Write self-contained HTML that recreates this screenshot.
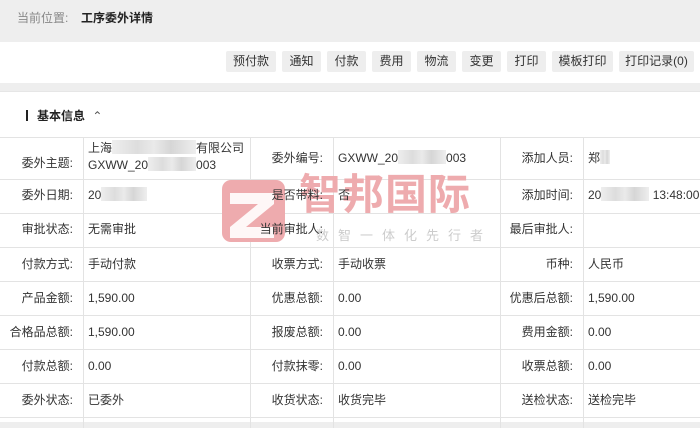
<!DOCTYPE html>
<html><head><meta charset="utf-8"><style>
*{margin:0;padding:0;box-sizing:border-box}
body{width:700px;height:422px;overflow:hidden;background:#eee;font-family:"Liberation Sans","Noto Sans CJK SC",sans-serif;font-size:12px;line-height:16px;color:#333;position:relative}
.hdr{position:absolute;left:0;top:0;width:700px;height:42px;background:#eee}
.hdr .a{position:absolute;left:17px;top:10px;color:#888}
.hdr .b{position:absolute;left:81px;top:10px;color:#222;font-weight:bold}
.bar{position:absolute;left:0;top:42px;width:700px;height:41px;background:#fff}
.btn{position:absolute;top:9px;height:21px;line-height:21px;background:#eee;border-radius:2px;text-align:center;color:#333;font-size:12px}
.card{position:absolute;left:0;top:91px;width:700px;height:331px;background:#fff;border-top:1px solid #e6e6e6}
.ttl{position:absolute;left:26px;top:16px;font-weight:bold;color:#222}
.ttl i{display:inline-block;width:2px;height:11px;background:#222;vertical-align:-1px;margin-right:9px}
.hl{position:absolute;left:0;width:700px;height:1px;background:#e3e3e3}
.vl{position:absolute;top:46px;width:1px;height:290px;background:#e3e3e3}
.t{position:absolute;white-space:nowrap;line-height:16px}
.l{text-align:right}
.blur{display:inline-block;height:14px;vertical-align:-2px;background:linear-gradient(90deg,#eee,#ddd 30%,#eaeaea 50%,#d6d6d6 70%,#eee)}
</style></head><body>
<div class="hdr"><span class="a">当前位置:</span><span class="b">工序委外详情</span></div>
<div class="bar">
<div class="btn" style="left:226px;width:50px">预付款</div>
<div class="btn" style="left:282px;width:39px">通知</div>
<div class="btn" style="left:327px;width:39px">付款</div>
<div class="btn" style="left:372px;width:39px">费用</div>
<div class="btn" style="left:417px;width:39px">物流</div>
<div class="btn" style="left:462px;width:39px">变更</div>
<div class="btn" style="left:507px;width:39px">打印</div>
<div class="btn" style="left:552px;width:61px">模板打印</div>
<div class="btn" style="left:619px;width:75px">打印记录(0)</div>
</div>
<div class="card">
<div class="ttl"><i></i>基本信息 <span style="font-weight:normal;color:#555;margin-left:4px">&#8963;</span></div>
<div class="hl" style="top:45px"></div>
<div class="hl" style="top:87px"></div>
<div class="hl" style="top:121px"></div>
<div class="hl" style="top:155px"></div>
<div class="hl" style="top:189px"></div>
<div class="hl" style="top:223px"></div>
<div class="hl" style="top:257px"></div>
<div class="hl" style="top:291px"></div>
<div class="hl" style="top:325px"></div>
<div class="vl" style="left:83px"></div>
<div class="vl" style="left:250px"></div>
<div class="vl" style="left:333px"></div>
<div class="vl" style="left:500px"></div>
<div class="vl" style="left:583px"></div>
</div>
<svg style="position:absolute;left:222px;top:180px" width="63" height="62" viewBox="0 0 63 62"><rect width="63" height="62" rx="9" fill="#eeabae"/><path d="M8 13 H52 V24 L24 47 H52 V58 H8 V47 L36 24 H8 Z" fill="#fff" opacity=".9"/></svg>
<div class="t" style="left:299px;top:170px;font-size:42px;line-height:50px;color:#eeabae;font-weight:bold;letter-spacing:1px">智邦国际</div>
<div class="t" style="left:316px;top:228px;font-size:13px;color:#ccc;letter-spacing:9px">数智一体化先行者</div>

<div class="t l" style="right:627px;top:155px">委外主题:</div>
<div class="t" style="left:88px;top:140px">上海<span class="blur" style="width:84px"></span>有限公司</div>
<div class="t" style="left:88px;top:157px">GXWW_20<span class="blur" style="width:48px"></span>003</div>
<div class="t l" style="right:377px;top:150px">委外编号:</div>
<div class="t" style="left:338px;top:150px">GXWW_20<span class="blur" style="width:48px"></span>003</div>
<div class="t l" style="right:127px;top:150px">添加人员:</div>
<div class="t" style="left:588px;top:150px">郑<span class="blur" style="width:10px"></span></div>

<div class="t l" style="right:627px;top:187px">委外日期:</div>
<div class="t" style="left:88px;top:187px">20<span class="blur" style="width:46px"></span></div>
<div class="t l" style="right:377px;top:187px">是否带料:</div>
<div class="t" style="left:338px;top:187px">否</div>
<div class="t l" style="right:127px;top:187px">添加时间:</div>
<div class="t" style="left:588px;top:187px">20<span class="blur" style="width:48px"></span> 13:48:00</div>

<div class="t l" style="right:627px;top:221px">审批状态:</div>
<div class="t" style="left:88px;top:221px">无需审批</div>
<div class="t l" style="right:377px;top:221px">当前审批人:</div>
<div class="t l" style="right:127px;top:221px">最后审批人:</div>

<div class="t l" style="right:627px;top:256px">付款方式:</div>
<div class="t" style="left:88px;top:256px">手动付款</div>
<div class="t l" style="right:377px;top:256px">收票方式:</div>
<div class="t" style="left:338px;top:256px">手动收票</div>
<div class="t l" style="right:127px;top:256px">币种:</div>
<div class="t" style="left:588px;top:256px">人民币</div>

<div class="t l" style="right:627px;top:290px">产品金额:</div>
<div class="t" style="left:88px;top:290px">1,590.00</div>
<div class="t l" style="right:377px;top:290px">优惠总额:</div>
<div class="t" style="left:338px;top:290px">0.00</div>
<div class="t l" style="right:127px;top:290px">优惠后总额:</div>
<div class="t" style="left:588px;top:290px">1,590.00</div>

<div class="t l" style="right:627px;top:324px">合格品总额:</div>
<div class="t" style="left:88px;top:324px">1,590.00</div>
<div class="t l" style="right:377px;top:324px">报废总额:</div>
<div class="t" style="left:338px;top:324px">0.00</div>
<div class="t l" style="right:127px;top:324px">费用金额:</div>
<div class="t" style="left:588px;top:324px">0.00</div>

<div class="t l" style="right:627px;top:358px">付款总额:</div>
<div class="t" style="left:88px;top:358px">0.00</div>
<div class="t l" style="right:377px;top:358px">付款抹零:</div>
<div class="t" style="left:338px;top:358px">0.00</div>
<div class="t l" style="right:127px;top:358px">收票总额:</div>
<div class="t" style="left:588px;top:358px">0.00</div>

<div class="t l" style="right:627px;top:392px">委外状态:</div>
<div class="t" style="left:88px;top:392px">已委外</div>
<div class="t l" style="right:377px;top:392px">收货状态:</div>
<div class="t" style="left:338px;top:392px">收货完毕</div>
<div class="t l" style="right:127px;top:392px">送检状态:</div>
<div class="t" style="left:588px;top:392px">送检完毕</div>
</body></html>
